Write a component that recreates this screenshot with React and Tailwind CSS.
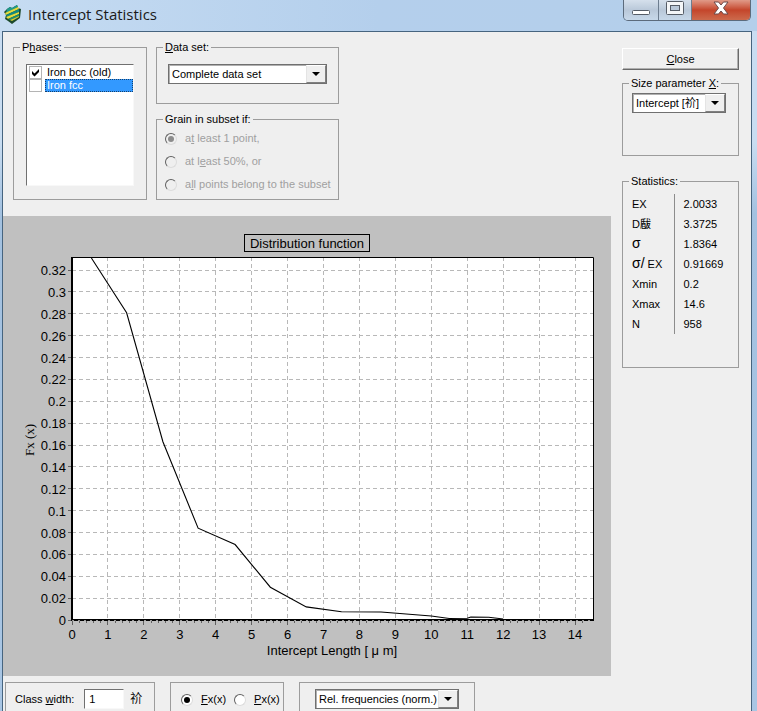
import React, { useState } from "react";
import clsx from "clsx";

const PHASES = ["Iron bcc (old)", "Iron fcc"];

const STATISTICS = [
  { label: "EX", value: "2.0033" },
  { label: "D瞂", value: "3.3725" },
  { symbol: "σ", value: "1.8364" },
  { symbol: "σ/", label: " EX", value: "0.91669" },
  { label: "Xmin", value: "0.2" },
  { label: "Xmax", value: "14.6" },
  { label: "N", value: "958" },
];

// plot area inside the chart's viewBox
const PLOT = { left: 69, top: 41, right: 591, bottom: 404 };
const X_STEP = 35.93;
const Y_STEP = 21.87;

const CURVE = [
  [0.54, 0.331],
  [1.52, 0.281],
  [2.53, 0.163],
  [3.51, 0.084],
  [4.54, 0.069],
  [5.52, 0.03],
  [6.52, 0.012],
  [7.5, 0.0075],
  [8.6, 0.0073],
  [10, 0.0036],
  [10.5, 0.0014],
  [11, 0.0016],
  [11.1, 0.0027],
  [11.6, 0.0025],
  [12, 0.0009],
];

const toX = (value) => PLOT.left + value * X_STEP;
const toY = (value) => PLOT.bottom - (value / 0.02) * Y_STEP;

const SUNKEN =
  "bg-white border border-t-[#707070] border-l-[#707070] border-b-[#f8f8f8] border-r-[#f8f8f8]";

const GroupBox = ({ title, className, children }) => (
  <fieldset
    className={clsx("min-w-0 border border-[#9c9c9c] text-black", className)}
  >
    {title && <legend className="ml-1.5 px-0.5 leading-[14px]">{title}</legend>}
    {children}
  </fieldset>
);

const ComboBox = ({ label, options, className }) => (
  <div
    className={clsx(
      "relative h-5 bg-white border border-[#707070] shadow-[inset_1px_1px_0_#b0b0b0]",
      className
    )}
  >
    <select
      aria-label={label}
      className="block appearance-none w-full h-full pl-[3px] pr-5 bg-transparent outline-none"
    >
      {options.map((option) => (
        <option key={option}>{option}</option>
      ))}
    </select>
    <span className="pointer-events-none absolute inset-y-0 right-0 w-5 bg-[#efefef] border border-t-white border-l-[#e4e4e4] border-r-[#808080] border-b-[#808080] flex items-center justify-center">
      <svg viewBox="0 0 8 4" className="w-2 h-1" aria-hidden="true">
        <path d="M0 0h8L4 4z" fill="#000" />
      </svg>
    </span>
  </div>
);

const Radio = ({ name, checked, disabled, onChange, className, children }) => (
  <label
    className={clsx("flex items-center", disabled && "text-[#a0a0a0]", className)}
  >
    <span className="relative w-3 h-3 shrink-0">
      <input
        type="radio"
        name={name}
        checked={checked}
        disabled={disabled}
        onChange={onChange}
        className={clsx(
          "block appearance-none w-3 h-3 rounded-full border border-t-[#606060] border-l-[#606060] border-b-[#dcdcdc] border-r-[#dcdcdc]",
          disabled ? "bg-[#efefef]" : "bg-white"
        )}
      />
      {checked && (
        <span
          className={clsx(
            "pointer-events-none absolute inset-[3px] rounded-full",
            disabled ? "bg-[#8c8c8c]" : "bg-black"
          )}
        />
      )}
    </span>
    <span className="whitespace-nowrap">{children}</span>
  </label>
);

const AppIcon = () => (
  <svg viewBox="0 0 18 20" className="w-[18px] h-5" aria-hidden="true">
    <path d="M3 5 6 3l2 1 5-3 1 3 3 1-1 9-8 6-4-3-3-2 1-4-2-3z" fill="#1d4a2c" />
    <path d="M3 5 6 3l2 1 5-3 1 2L2 9z" fill="#1e9a8c" />
    <path d="M1 9 14 3l1 2L2 11z" fill="#e6dc3c" />
    <path d="M2 11 15 5v3L3 13z" fill="#138a80" />
    <path d="M2 13 15 8v2L4 15z" fill="#e6dc3c" />
    <path d="M4 15 15 10v2L6 16z" fill="#1d8f70" />
    <path d="m6 16 9-4v1l-7 4z" fill="#c9cc3c" />
  </svg>
);

const TitleBar = () => (
  <header className="h-[31px] shrink-0 flex items-start justify-between pl-1 pr-1.5 bg-linear-to-r from-[#c6dcf2] via-[#b4cfec] to-[#b4cfea]">
    <div className="flex items-center gap-1 pt-1">
      <AppIcon />
      <h1 className="font-['Open_Sans','Noto_Sans',sans-serif] text-[15px] leading-5 text-[#1a1a1a] pl-0.5">
        Intercept Statistics
      </h1>
    </div>
    <div className="flex h-[21px] rounded-b-[5px] border border-t-0 border-[#5c6b7c] overflow-hidden">
      <button
        type="button"
        aria-label="Minimize"
        className="w-[35px] flex items-center justify-center border-r border-[#6d7d8f] bg-linear-to-b from-[#d5e0ec] via-[#b9c8d9] to-[#c7d8e9]"
      >
        <svg viewBox="0 0 18 12" className="w-[18px] h-3" aria-hidden="true">
          <rect x=".5" y="6.5" width="17" height="4" rx="1" fill="#fff" stroke="#555c66" />
        </svg>
      </button>
      <button
        type="button"
        aria-label="Maximize"
        className="w-[33px] flex items-center justify-center border-r border-[#6d7d8f] bg-linear-to-b from-[#d5e0ec] via-[#b9c8d9] to-[#c7d8e9]"
      >
        <svg viewBox="0 0 18 14" className="w-[18px] h-3.5 mb-1" aria-hidden="true">
          <rect x=".5" y=".5" width="17" height="13" rx="1" fill="#f4f6f8" stroke="#555c66" />
          <rect x="4.5" y="4.5" width="9" height="5" fill="#b9c8d9" stroke="#555c66" />
        </svg>
      </button>
      <button
        type="button"
        aria-label="Close window"
        className="w-[58px] flex items-center justify-center bg-linear-to-b from-[#e09a88] via-[#c4452b] to-[#cc6a4c]"
      >
        <svg viewBox="0 0 16 14" className="w-4 h-3.5 mb-1" aria-hidden="true">
          <path
            d="M1 1h4.500L8 4l2.500-3H15l-4.500 6 4.500 6h-4.500L8 10l-2.500 3H1l4.500-6z"
            fill="#fff"
            stroke="#6b4a4a"
          />
        </svg>
      </button>
    </div>
  </header>
);

const PhaseList = () => {
  const [checked, setChecked] = useState([true, false]);

  const toggle = (index) => {
    setChecked((cur) => cur.map((item, i) => (i === index ? !item : item)));
  };

  return (
    <div className={clsx("mt-2.5 mx-3 mb-[13px] h-[122px] pl-0.5 pt-px", SUNKEN)}>
      {PHASES.map((phase, index) => (
        <label key={phase} className="flex h-[13px]">
          <span className="relative w-[13px] mr-[3px] shrink-0">
            <input
              type="checkbox"
              checked={checked[index]}
              onChange={() => toggle(index)}
              className="block appearance-none w-[13px] h-[13px] bg-white border border-[#b4b4b4]"
            />
            {checked[index] && (
              <svg
                viewBox="0 0 13 13"
                className="pointer-events-none absolute inset-0"
                aria-hidden="true"
              >
                <path d="M3 5 5.500 7.500 10 3v3L5.500 10.500 3 8z" fill="#000" />
              </svg>
            )}
          </span>
          <span
            className={clsx(
              "flex-1 pl-0.5 leading-[13px] whitespace-nowrap",
              index === 1 &&
                "bg-[#3399ff] text-white outline-1 outline-dotted -outline-offset-1 outline-[#14406c]"
            )}
          >
            {phase}
          </span>
        </label>
      ))}
    </div>
  );
};

const DistributionChart = () => {
  const xTicks = Array.from({ length: 15 }, (_, i) => i);
  const yTicks = Array.from({ length: 17 }, (_, i) => i);
  const minorTicks = Array.from({ length: 72 }, (_, i) => i);

  return (
    <svg
      viewBox="0 0 608 460"
      className="block w-full h-auto bg-[#c0c0c0] font-['Liberation_Sans',sans-serif] text-[13px]"
      role="img"
      aria-label="Distribution function"
    >
      <rect x="241.500" y="18.500" width="125" height="17" fill="none" stroke="#000" />
      <text x="304" y="32" textAnchor="middle">
        Distribution function
      </text>

      <rect
        x={PLOT.left}
        y={PLOT.top}
        width={PLOT.right - PLOT.left}
        height={PLOT.bottom - PLOT.top}
        fill="#fff"
      />

      <g stroke="#b8b8b8" strokeDasharray="4 3" shapeRendering="crispEdges">
        {xTicks.slice(1).map((x) => (
          <line key={x} x1={toX(x)} x2={toX(x)} y1={PLOT.top} y2={PLOT.bottom} />
        ))}
        {yTicks.slice(1).map((y) => (
          <line
            key={y}
            x1={PLOT.left}
            x2={PLOT.right}
            y1={toY(y * 0.02)}
            y2={toY(y * 0.02)}
          />
        ))}
      </g>

      <g stroke="#606060" shapeRendering="crispEdges">
        {yTicks.map((y) => (
          <line key={y} x1="65" x2="69" y1={toY(y * 0.02)} y2={toY(y * 0.02)} />
        ))}
        {xTicks.map((x) => (
          <line key={x} x1={toX(x)} x2={toX(x)} y1="404" y2="409" />
        ))}
        {minorTicks.map((i) => (
          <line key={i} x1={toX(i / 5)} x2={toX(i / 5)} y1="404" y2="407" />
        ))}
      </g>

      <g stroke="#000" fill="none">
        <path d="M69 41.500H590.500V404" />
        <path d="M69 41V405M68 404H591" strokeWidth="2" />
        <polyline
          points={CURVE.map(([x, y]) => `${toX(x)},${toY(y)}`).join(" ")}
          strokeWidth="1.100"
        />
      </g>
      <path
        d="M69 404.500H590"
        stroke="#9a9a9a"
        strokeDasharray="2 4"
        shapeRendering="crispEdges"
      />

      {yTicks.map((y) => (
        <text key={y} x="63" y={toY(y * 0.02) + 5} textAnchor="end">
          {Number((y * 0.02).toFixed(2))}
        </text>
      ))}
      {xTicks.map((x) => (
        <text key={x} x={toX(x)} y="423" textAnchor="middle">
          {x}
        </text>
      ))}
      <text x="329" y="439" textAnchor="middle">
        Intercept Length [ μ m]
      </text>
      <text
        transform="translate(31 224) rotate(-90)"
        textAnchor="middle"
        className="font-['Liberation_Serif',serif] text-[13px]"
      >
        Fx (x)
      </text>
    </svg>
  );
};

const Statistics = () => (
  <GroupBox title="Statistics:" className="mt-[18px] h-[194px]">
    <table className="mt-1.5 ml-[9px]">
      <tbody>
        {STATISTICS.map(({ label, value, symbol }) => (
          <tr key={value} className="h-5">
            <th
              scope="row"
              className="w-[42px] p-0 text-left font-normal border-r border-[#8c8c8c] whitespace-nowrap"
            >
              {symbol && <span className="text-sm leading-3">{symbol}</span>}
              {label}
            </th>
            <td className="p-0 pl-[9px]">{value}</td>
          </tr>
        ))}
      </tbody>
    </table>
  </GroupBox>
);

const App = () => {
  const [mode, setMode] = useState("fx");

  return (
    <div className="h-screen overflow-hidden flex flex-col bg-linear-to-b from-[#c9ddf1] from-20% via-[#a3c1e0] via-30% to-[#a9c6e4] font-['Liberation_Sans','Noto_Sans_CJK_SC',sans-serif] text-[11px] leading-[13px] text-black">
      <TitleBar />
      <main className="flex-1 min-h-0 ml-0.5 mr-[5px] flex items-start bg-[#efefef] border border-b-0 border-[#46647f] overflow-hidden">
        <div className="flex-1 min-w-0">
          <div className="flex items-stretch gap-[9px] pt-2 pl-2.5 pb-4">
            <GroupBox
              title={
                <>
                  P<u>h</u>ases:
                </>
              }
              className="w-[134px]"
            >
              <PhaseList />
            </GroupBox>
            <div className="w-[183px] flex flex-col gap-2">
              <GroupBox
                title={
                  <>
                    <u>D</u>ata set:
                  </>
                }
                className="h-[64px]"
              >
                <ComboBox
                  label="Data set"
                  options={["Complete data set"]}
                  className="mt-2.5 mx-[11px]"
                />
              </GroupBox>
              <GroupBox title="Grain in subset if:" className="flex-1">
                <div className="flex flex-col gap-2.5 pt-1.5 pl-2">
                  <Radio name="grain" checked disabled className="gap-2">
                    a<u>t</u> least 1 point,
                  </Radio>
                  <Radio name="grain" checked={false} disabled className="gap-2">
                    at l<u>e</u>ast 50%, or
                  </Radio>
                  <Radio name="grain" checked={false} disabled className="gap-2">
                    a<u>l</u>l points belong to the subset
                  </Radio>
                </div>
              </GroupBox>
            </div>
          </div>

          <DistributionChart />

          <div className="flex pt-1.5 pl-0.5 gap-[15px]">
            <GroupBox className="w-[150px] h-12 px-[9px] pt-1.5">
              <div className="flex items-center">
                <label htmlFor="class-width" className="whitespace-nowrap">
                  Class <u>w</u>idth:
                </label>
                <input
                  id="class-width"
                  defaultValue="1"
                  className={clsx("ml-2.5 w-10 h-5 px-1 outline-none", SUNKEN)}
                />
                <span className="ml-1.5 text-xs">祄</span>
              </div>
            </GroupBox>
            <GroupBox className="w-[114px] h-12 pl-2.5 pt-2.5">
              <div className="flex items-center gap-2">
                <Radio
                  name="mode"
                  checked={mode === "fx"}
                  onChange={() => setMode("fx")}
                  className="gap-2"
                >
                  <u>F</u>x(x)
                </Radio>
                <Radio
                  name="mode"
                  checked={mode === "px"}
                  onChange={() => setMode("px")}
                  className="gap-2"
                >
                  <u>P</u>x(x)
                </Radio>
              </div>
            </GroupBox>
            <GroupBox className="w-[176px] h-12 px-[15px] pt-1.5">
              <ComboBox
                label="Frequency type"
                options={["Rel. frequencies (norm.)"]}
              />
            </GroupBox>
          </div>
        </div>

        <aside className="w-[140px] shrink-0 pt-4 pl-[11px] pr-3">
          <button
            type="button"
            className="block w-full h-[22px] text-center bg-[#efefef] border border-t-white border-l-white border-r-[#6a6a6a] border-b-[#6a6a6a] shadow-[inset_-1px_-1px_0_#b0b0b0]"
          >
            <u>C</u>lose
          </button>
          <GroupBox
            title={
              <>
                Size parameter <u>X</u>:
              </>
            }
            className="mt-1.5 h-20"
          >
            <ComboBox
              label="Size parameter X"
              options={["Intercept [祄]"]}
              className="mt-[3px] ml-[9px] mr-3"
            />
          </GroupBox>
          <Statistics />
        </aside>
      </main>
    </div>
  );
};

export default App;
